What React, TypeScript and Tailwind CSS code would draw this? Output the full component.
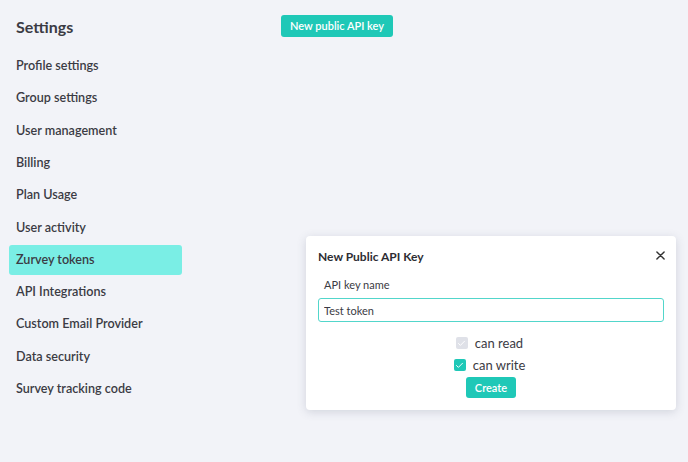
import { Check } from 'lucide-react';

const navItems = [
  'Profile settings',
  'Group settings',
  'User management',
  'Billing',
  'Plan Usage',
  'User activity',
  'Zurvey tokens',
  'API Integrations',
  'Custom Email Provider',
  'Data security',
  'Survey tracking code',
];

function Checkbox({ label, checked, disabled }: { label: string; checked?: boolean; disabled?: boolean }) {
  return (
    <label className="flex items-center gap-[7px] text-[13px] leading-[16px] text-[#3b3b44]">
      <span
        className={`flex size-[12px] items-center justify-center rounded-[2px] ${
          disabled ? 'bg-[#dfe1e8]' : 'bg-[#1fc8b7]'
        }`}
      >
        {checked && <Check className="size-[9px] text-white" strokeWidth={2.5} />}
      </span>
      {label}
    </label>
  );
}

export default function App() {
  return (
    <div className="flex h-[462px] w-[688px] bg-[#f2f3f8] font-['Lato',sans-serif] text-[#3b3b44]">
      <aside className="w-[190px] pl-[9px] pt-[16px]">
        <h1 className="mb-[13px] px-[7px] text-[16px] font-bold leading-[22px]">Settings</h1>
        <nav className="flex w-[173px] flex-col gap-[2.3px]">
          {navItems.map((item) => (
            <div
              key={item}
              className={`flex h-[30px] items-center rounded-[3px] px-[7px] pt-[1px] text-[12.6px] font-semibold ${
                item === 'Zurvey tokens' ? 'bg-[#7aeee5]' : ''
              }`}
            >
              {item}
            </div>
          ))}
        </nav>
      </aside>
      <main className="flex flex-1 flex-col items-start pl-[91px] pt-[15px]">
        <button className="block h-[22px] rounded-[3px] bg-[#1fc8b7] px-[9px] text-[11px] font-semibold leading-[22px] text-white">
          New public API key
        </button>
        <div className="ml-[25px] mt-[199px] w-[370px] rounded-[4px] bg-white px-[12px] pb-[12px] pt-[13px] shadow-[0_2px_10px_rgba(60,70,100,0.18)]">
          <div className="flex items-center justify-between">
            <h2 className="text-[12px] font-bold leading-[16px] text-[#2d2d33]">New Public API Key</h2>
            <svg viewBox="0 0 10 10" className="-mr-px mb-[4px] size-[9px] text-[#333]" stroke="currentColor" strokeWidth={1.6} strokeLinecap="round">
              <path d="M1 1l8 8M9 1L1 9" />
            </svg>
          </div>
          <div className="mt-[13px] pl-[6px] text-[11px] leading-[14px] text-[#3b3b44]">API key name</div>
          <input
            readOnly
            value="Test token"
            className="mt-[6px] block h-[24px] w-[346px] rounded-[3px] border border-[#52d6cb] px-[5px] text-[11px] text-[#3b3b44] outline-none"
          />
          <div className="mt-[13px] flex flex-col items-center gap-[6px] pr-[3px]">
            <Checkbox label="can read" checked disabled />
            <Checkbox label="can write" checked />
          </div>
          <div className="mt-[4px] flex justify-center">
            <button className="h-[21px] rounded-[3px] bg-[#1fc8b7] px-[9px] text-[11px] font-semibold leading-[21px] text-white">
              Create
            </button>
          </div>
        </div>
      </main>
    </div>
  );
}
